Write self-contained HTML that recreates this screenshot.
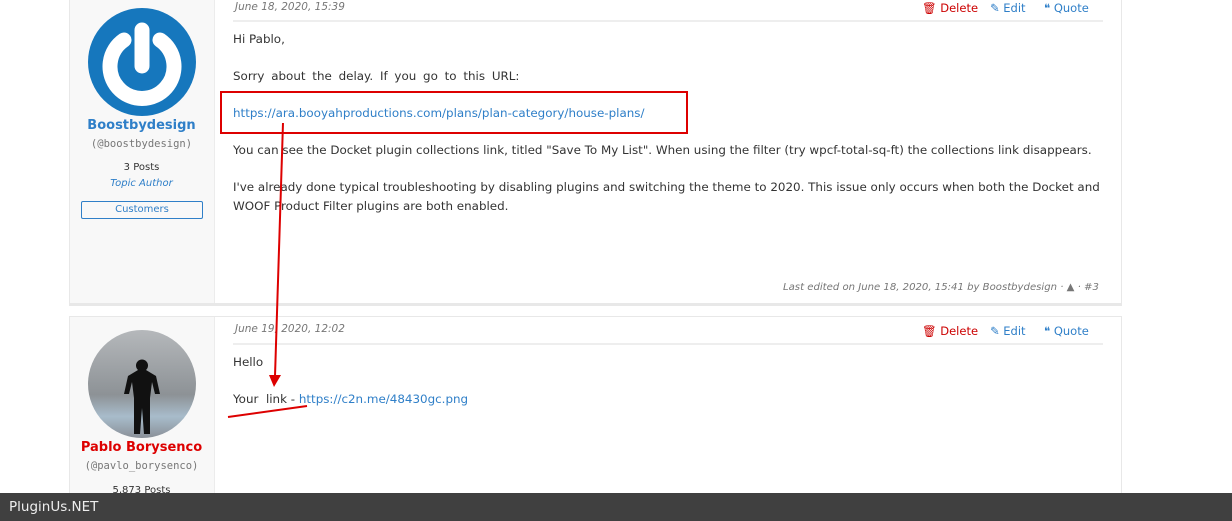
<!DOCTYPE html>
<html><head><meta charset="utf-8"><style>
*{margin:0;padding:0;box-sizing:border-box}
body{width:1232px;height:521px;overflow:hidden;background:#fff;font-family:"DejaVu Sans","Liberation Sans",sans-serif;font-size:11.9px;color:#333;position:relative}
.a{position:absolute;white-space:nowrap}
.card{position:absolute;left:69px;width:1053px;border:1px solid #e8e8e8;background:#fff}
.side{position:absolute;left:0;top:0;bottom:0;width:145px;background:#f8f8f8;border-right:1px solid #ececec}
.date{font-style:italic;color:#777;font-size:10.5px}
.sep{position:absolute;left:164px;width:870px;height:2px;background:#eee}
.act{font-size:11.5px}
.del{color:#c00}.blue{color:#2f7fc8}
a{color:#2f7fc8;text-decoration:none}
.mono{font-family:"DejaVu Sans Mono","Liberation Mono",monospace;font-size:10.5px;color:#777}
</style></head><body>
<div class="card" style="top:-2px;height:308px;border-bottom:3px solid #e8e8e8">
 <div class="side"></div>
</div>
<div class="card" style="top:316px;height:200px">
 <div class="side"></div>
</div>
<!-- post 1 -->
<svg class="a" style="left:88px;top:8px" width="108" height="108" viewBox="0 0 108 108"><circle cx="54" cy="54" r="54" fill="#1677bd"/><path d="M36 32 A32 32 0 1 0 72 32" fill="none" stroke="#fff" stroke-width="15" stroke-linecap="round"/><path d="M54 22 V58" stroke="#fff" stroke-width="15" stroke-linecap="round"/></svg>
<div class="a" style="left:69px;width:145px;text-align:center;top:118px;font-weight:bold;font-size:13px;color:#2f7fc8">Boostbydesign</div>
<div class="a mono" style="left:69px;width:145px;text-align:center;top:138px">(@boostbydesign)</div>
<div class="a" style="left:69px;width:145px;text-align:center;top:162px;font-size:10px">3 Posts</div>
<div class="a" style="left:69px;width:145px;text-align:center;top:178px;font-size:10px;font-style:italic;color:#2f7fc8">Topic Author</div>
<div class="a" style="left:81px;top:201px;width:122px;height:18px;border:1px solid #2f7fc8;border-radius:2px;text-align:center;font-size:10px;line-height:16px;color:#2f7fc8">Customers</div>
<div class="a date" style="left:235px;top:1px">June 18, 2020, 15:39</div>
<div class="sep" style="top:20px;left:233px"></div>
<div class="a act" style="left:922px;top:1px"><span class="del">🗑 Delete</span></div>
<div class="a act blue" style="left:990px;top:1px">✎ Edit</div>
<div class="a act blue" style="left:1044px;top:1px">❝ Quote</div>
<div class="a" style="left:233px;top:32px">Hi Pablo,</div>
<div class="a" style="left:233px;top:69px;word-spacing:3px">Sorry about the delay. If you go to this URL:</div>
<div class="a" style="left:233px;top:106px"><a>https://ara.booyahproductions.com/plans/plan-category/house-plans/</a></div>
<div class="a" style="left:233px;top:143px">You can see the Docket plugin collections link, titled "Save To My List". When using the filter (try wpcf-total-sq-ft) the collections link disappears.</div>
<div class="a" style="left:233px;top:180px">I've already done typical troubleshooting by disabling plugins and switching the theme to 2020. This issue only occurs when both the Docket and</div>
<div class="a" style="left:233px;top:199px">WOOF Product Filter plugins are both enabled.</div>
<div class="a date" style="left:783px;top:282px;font-size:10.1px">Last edited on June 18, 2020, 15:41 by Boostbydesign · ▲ · #3</div>
<!-- post 2 -->
<svg class="a" style="left:88px;top:330px" width="108" height="108" viewBox="0 0 108 108"><defs><linearGradient id="g" x1="0" y1="0" x2="0" y2="1"><stop offset="0" stop-color="#b5b8bb"/><stop offset=".6" stop-color="#8d9296"/><stop offset=".8" stop-color="#a8bccb"/><stop offset="1" stop-color="#8a9098"/></linearGradient></defs><circle cx="54" cy="54" r="54" fill="url(#g)"/><path d="M50 40 a6 6 0 1 1 8 0 l10 6 l4 18 l-5 0 l-3 -12 l-2 16 l0 36 l-6 0 l-2 -26 l-2 26 l-6 0 l0 -36 l-2 -16 l-3 12 l-5 0 l4 -18z" fill="#111"/></svg>
<div class="a" style="left:69px;width:145px;text-align:center;top:440px;font-weight:bold;font-size:13px;color:#d00">Pablo Borysenco</div>
<div class="a mono" style="left:69px;width:145px;text-align:center;top:460px">(@pavlo_borysenco)</div>
<div class="a" style="left:69px;width:145px;text-align:center;top:485px;font-size:10px">5,873 Posts</div>
<div class="a date" style="left:235px;top:323px">June 19, 2020, 12:02</div>
<div class="sep" style="top:343px;left:233px"></div>
<div class="a act" style="left:922px;top:324px"><span class="del">🗑 Delete</span></div>
<div class="a act blue" style="left:990px;top:324px">✎ Edit</div>
<div class="a act blue" style="left:1044px;top:324px">❝ Quote</div>
<div class="a" style="left:233px;top:355px">Hello</div>
<div class="a" style="left:233px;top:392px">Your&nbsp; link - <a>https://c2n.me/48430gc.png</a></div>
<!-- annotations -->
<div class="a" style="left:220px;top:91px;width:468px;height:43px;border:2px solid #d00"></div>
<svg class="a" style="left:0;top:0" width="1232" height="521"><path d="M283 123 L275 376" stroke="#d00" stroke-width="2"/><path d="M269 375 L281 375 L274 387z" fill="#d00"/><path d="M228 417 L307 406" stroke="#d00" stroke-width="2"/></svg>
<div class="a" style="left:0;top:493px;width:1232px;height:28px;background:#404040;color:#eee;font-size:13.5px;line-height:28px;padding-left:9px">PluginUs.NET</div>
</body></html>
